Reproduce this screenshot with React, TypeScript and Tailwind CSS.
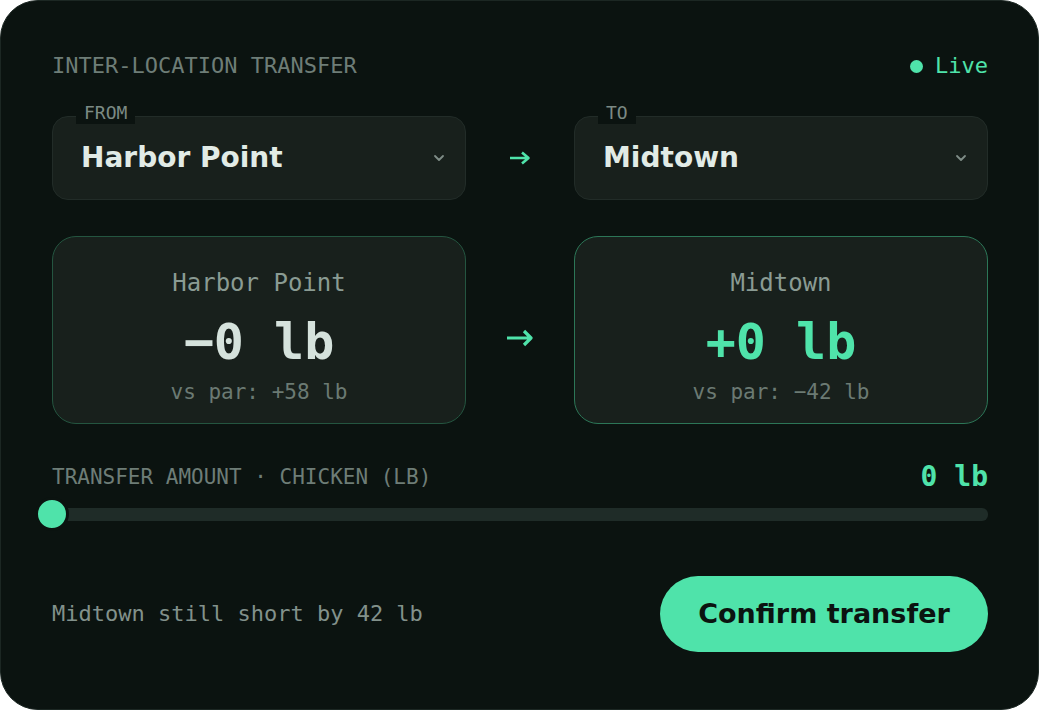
import React from "react";

const mono = "font-['DejaVu_Sans_Mono',monospace]";
const sans = "font-['DejaVu_Sans',sans-serif]";

function Chevron() {
  return (
    <svg width="12" height="8" viewBox="0 0 12 8" fill="none">
      <path d="M2 2l4 4 4-4" stroke="#7f8d87" strokeWidth="1.8" strokeLinecap="round" strokeLinejoin="round" />
    </svg>
  );
}

function Select({ label, value }: { label: string; value: string }) {
  return (
    <div className="relative flex h-[84px] w-[414px] items-center justify-between rounded-[16px] border border-[#222c28] bg-[#18201c] pl-[28px] pr-[20px]">
      <div className={`absolute left-[23px] top-[-15px] bg-[#0b1310] px-[8px] text-[18px] leading-[22px] text-[#7b8a84] ${mono}`}>
        {label}
      </div>
      <span className={`text-[28px] font-bold leading-[34px] text-[#e1ebe6] ${sans}`}>{value}</span>
      <Chevron />
    </div>
  );
}

function Arrow({ size }: { size: "sm" | "lg" }) {
  return (
    <div className="flex w-[108px] items-center justify-center">
      {size === "sm" ? (
        <svg width="22" height="14" viewBox="0 0 22 14" fill="none">
          <path d="M1 7h18M13 1.5L19.5 7 13 12.5" stroke="#4fe3aa" strokeWidth="2.6" strokeLinejoin="round" />
        </svg>
      ) : (
        <svg className="mt-[16px]" width="28" height="18" viewBox="0 0 28 18" fill="none">
          <path d="M1 9h24M18 2l7 7-7 7" stroke="#4fe3aa" strokeWidth="3.2" strokeLinejoin="round" />
        </svg>
      )}
    </div>
  );
}

function StatCard({ name, value, sub, accent }: { name: string; value: string; sub: string; accent?: boolean }) {
  return (
    <div
      className={`flex h-[188px] w-[414px] flex-col items-center rounded-[24px] border bg-[#18201c] pt-[32px] ${
        accent ? "border-[#2c7657]" : "border-[#245540]"
      } ${mono}`}
    >
      <div className="text-[24px] leading-[28px] text-[#8a9b93]">{name}</div>
      <div className={`mt-[15px] text-[50px] font-bold leading-[60px] ${accent ? "text-[#4fe3aa]" : "text-[#d5e2dc]"}`}>
        {value}
      </div>
      <div className="mt-[7px] text-[21px] leading-[26px] text-[#6b7a73]">{sub}</div>
    </div>
  );
}

export default function App() {
  return (
    <div className="h-[712px] w-[1040px] bg-white">
      <div className="h-[710px] w-[1039px] rounded-[38px] border border-[#1c2723] bg-[#0b1310] pl-[51px] pr-[50px] pt-[52px]">
        <div className={`flex h-[26px] items-center justify-between ${mono}`}>
          <span className="text-[22px] leading-[26px] text-[#6e7d77]">INTER-LOCATION TRANSFER</span>
          <span className="flex items-center gap-[12px] text-[22px] leading-[26px] text-[#4fe3aa]">
            <span className="h-[13px] w-[13px] rounded-full bg-[#4fe3aa]" />
            Live
          </span>
        </div>

        <div className="mt-[37px] flex">
          <Select label="FROM" value="Harbor Point" />
          <Arrow size="sm" />
          <Select label="TO" value="Midtown" />
        </div>

        <div className="mt-[36px] flex">
          <StatCard name="Harbor Point" value="−0 lb" sub="vs par: +58 lb" />
          <Arrow size="lg" />
          <StatCard name="Midtown" value="+0 lb" sub="vs par: −42 lb" accent />
        </div>

        <div className={`mt-[39px] flex h-[28px] items-center justify-between ${mono}`}>
          <span className="text-[21px] leading-[28px] text-[#6e7d77]">TRANSFER AMOUNT · CHICKEN (LB)</span>
          <span className="text-[28px] font-bold leading-[28px] text-[#4fe3aa]">0 lb</span>
        </div>

        <div className="relative mt-[8px] flex h-[30px] items-center">
          <div className="h-[13px] w-full rounded-r-[6px] bg-[#1f2c28]" />
          <div className="absolute left-[-17px] top-[-2px] h-[34px] w-[34px] rounded-full border-[3px] border-[#0b1310] bg-[#4fe3aa]" />
        </div>

        <div className="mt-[47px] flex items-center justify-between">
          <span className={`text-[22px] leading-[26px] text-[#82918b] ${mono}`}>Midtown still short by 42 lb</span>
          <button className={`flex h-[76px] w-[328px] items-center justify-center rounded-full bg-[#4fe3aa] text-[27px] font-bold text-[#0b1310] ${sans}`}>
            Confirm transfer
          </button>
        </div>
      </div>
    </div>
  );
}
